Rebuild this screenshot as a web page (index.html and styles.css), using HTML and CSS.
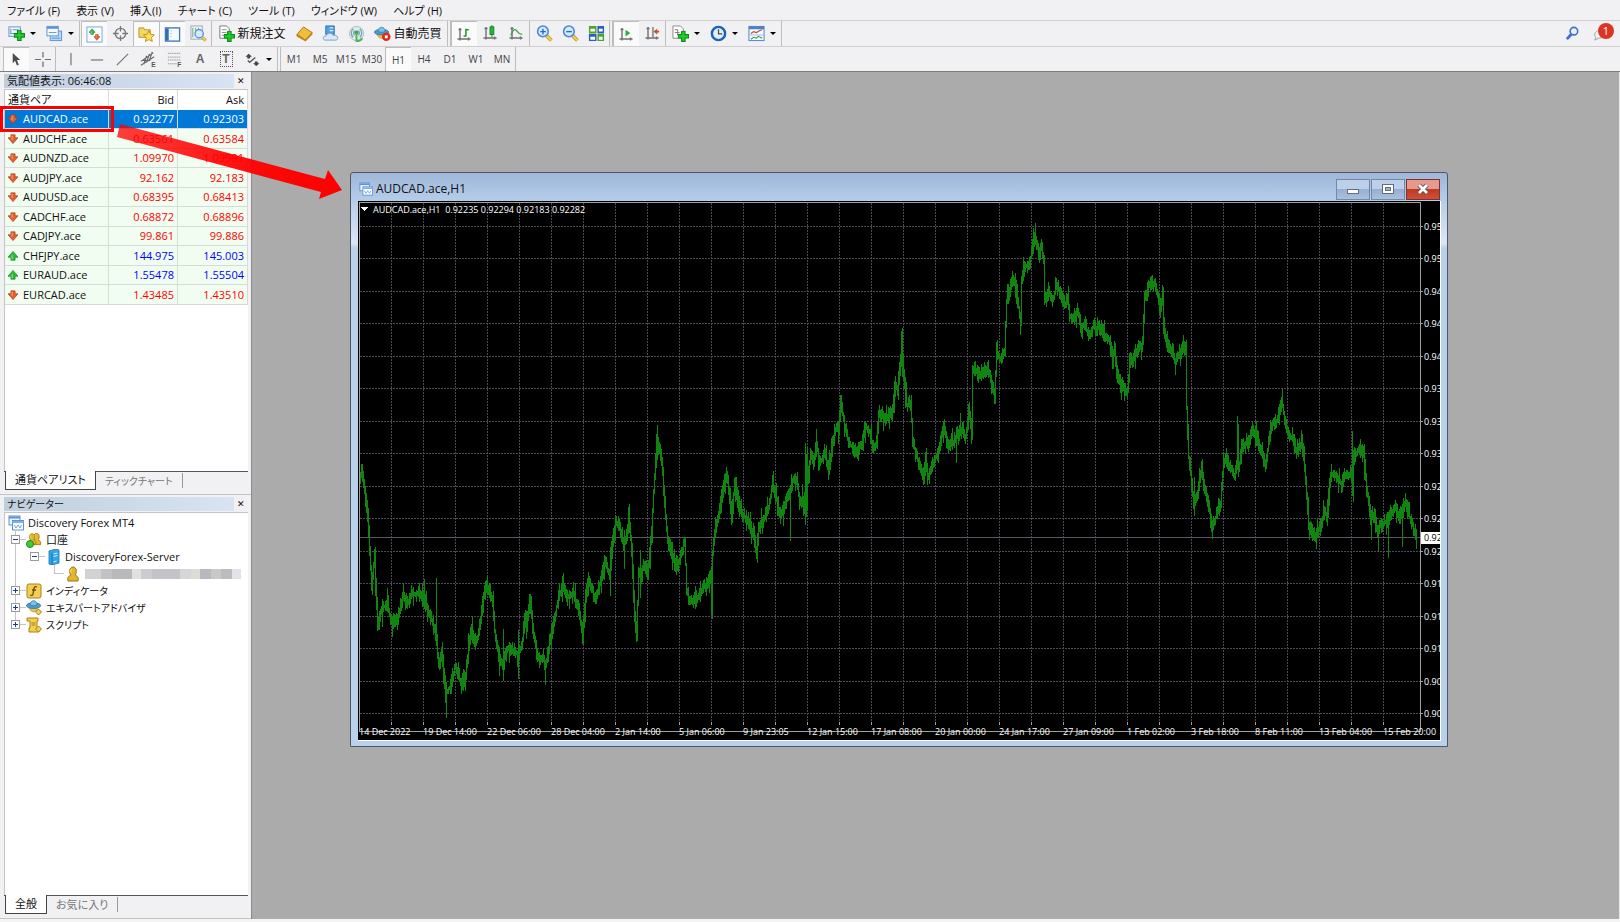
FILE: index.html
```
<!DOCTYPE html>
<html lang="ja">
<head>
    <meta charset="UTF-8">
    <meta name="viewport" content="width=device-width, initial-scale=1.0">
    <title>Discovery Forex MT4</title>
    <link rel="stylesheet" href="styles.css">
</head>
<body>

    <nav class="menu-bar">
        <button>ファイル (F)</button>
        <button>表示 (V)</button>
        <button>挿入(I)</button>
        <button>チャート (C)</button>
        <button>ツール (T)</button>
        <button>ウィンドウ (W)</button>
        <button>ヘルプ (H)</button>
    </nav>

    <!-- shared icon shapes -->
    <svg class="defs" aria-hidden="true">
        <symbol id="i-plus" viewBox="0 0 10 10"><path d="M3.5 .5h3v3h3v3h-3v3h-3v-3h-3v-3h3z" fill="#1fd02c" stroke="#0a8a18"/></symbol>
        <symbol id="i-axes" viewBox="0 0 16 16"><path d="M4 2v12.500M1.500 13h13M2.500 3.500h3M12.500 11.500v3" fill="none" stroke="#707070" stroke-width="1.400"/></symbol>
        <symbol id="i-charts" viewBox="0 0 16 16"><rect x="1" y="1" width="11" height="9" fill="#eaf3fd" stroke="#5b93d6"/><path d="M1 2.500h11" stroke="#5b93d6" stroke-width="2"/><rect x="4.500" y="5.500" width="11" height="9.500" fill="#fff" stroke="#5b93d6"/><path d="M4.500 7h11" stroke="#7fb0ea" stroke-width="2"/><path d="M6 10l2 3 2-3 2 3 1.500-3" fill="none" stroke="#6fa2dd"/></symbol>
        <symbol id="i-down" viewBox="0 0 12 12"><path d="M3.500 1h5v3.500H12L6 11.500 0 4.500h3.500z" fill="#e2602c" stroke="#a83a18" stroke-width=".8"/><path d="M5 2v5" stroke="#ffb08a"/></symbol>
        <symbol id="i-up" viewBox="0 0 12 12"><path d="M3.500 11h5V7.500H12L6 .5 0 7.500h3.500z" fill="#2fb83a" stroke="#12801f" stroke-width=".8"/><path d="M5 5v5" stroke="#a2efa0"/></symbol>
        <symbol id="i-man" viewBox="0 0 16 16"><path d="M3 15c-1-4 1-5 3-6C4 7 4 1 8 1s4 6 2 8c2 1 4 2 3 6z" fill="#e3b62c" stroke="#9b7410"/><path d="M6.500 3c-1 1-1 3 0 4" stroke="#fbe58c" fill="none"/></symbol>
        <symbol id="i-hat" viewBox="0 0 18 16"><path d="M3 8c2 8 9 8 11 0z" fill="#f0c341" stroke="#a8811d" stroke-width=".7"/><ellipse cx="8.500" cy="7" rx="8" ry="3.200" fill="#4d9bcb" stroke="#2f75a5"/><path d="M4.500 6c0-6 8-6 8 0-2 1.500-6 1.500-8 0z" fill="#79c1e8" stroke="#2f75a5" stroke-width=".8"/></symbol>
        <symbol id="i-lens" viewBox="0 0 16 16"><path d="M10 10l4.500 4.500" stroke="#c99a1e" stroke-width="3.400"/><path d="M10 10l4.500 4.500" stroke="#f4d765" stroke-width="1.500"/><circle cx="6.500" cy="6" r="5" fill="#d3eaff" stroke="#4c8bd4" stroke-width="1.500"/></symbol>
    </svg>

    <div class="toolbar">
        <button class="tool drop" aria-label="新規チャート"><svg viewBox="0 0 18 18"><rect x="1" y="2" width="12" height="10" fill="#eef6ff" stroke="#5b93d6"/><path d="M3 4v6M3 9h8M5 5h6" stroke="#6e8fae"/><use href="#i-plus" x="6" y="5" width="12" height="12"/></svg></button>
        <button class="tool drop" aria-label="表示の組表示"><svg viewBox="0 0 18 18"><rect x="4.500" y="6.500" width="12" height="10" fill="#bcd6f5" stroke="#5b93d6"/><rect x="1" y="1.500" width="12" height="10" fill="#f4f9ff" stroke="#5b93d6"/><path d="M1 3h12" stroke="#5b93d6" stroke-width="2"/><path d="M3 8h8M6 14h9" stroke="#5b93d6"/></svg></button>
        <i class="sep"></i>
        <button class="tool on" aria-label="気配値表示"><svg viewBox="0 0 18 18"><rect x="1" y="1" width="16" height="16" fill="#fff" stroke="#6ea4e6"/><use href="#i-up" x="3" y="2" width="7" height="8"/><use href="#i-down" x="8" y="8" width="7" height="8"/></svg></button>
        <button class="tool" aria-label="データウィンドウ"><svg viewBox="0 0 18 18"><circle cx="9" cy="9" r="5.500" fill="none" stroke="#777" stroke-width="1.400"/><path d="M9 1v6M9 11v6M1 9h6M11 9h6" stroke="#777" stroke-width="1.400"/></svg></button>
        <button class="tool on" aria-label="ナビゲーター"><svg viewBox="0 0 18 18"><path d="M1 2h5l1 2h6v8H1z" fill="#f6d465" stroke="#b99224"/><path d="M11.500 5l1.800 3.800 4 .5-3 2.900.8 4.200-3.600-2-3.600 2 .8-4.200-3-2.900 4-.5z" fill="#ffe14d" stroke="#b08a14" stroke-width=".9"/></svg></button>
        <button class="tool on" aria-label="ターミナル"><svg viewBox="0 0 18 18"><rect x="1.500" y="2" width="15" height="14" fill="#f4faff" stroke="#3f76bd" stroke-width="1.400"/><path d="M3.500 2.500v13" stroke="#356db5" stroke-width="3"/><path d="M7 5h1M7 8h1M7 11h1" stroke="#8ab"/></svg></button>
        <button class="tool" aria-label="ストラテジーテスター"><svg viewBox="0 0 18 18"><rect x="1" y="1" width="12" height="14" fill="#eef3f8" stroke="#9aa7b5"/><path d="M3 3v10M6 3v6M9 3v4" stroke="#6ba46b"/><use href="#i-lens" x="4" y="4" width="14" height="14"/></svg></button>
        <i class="sep"></i>
        <button class="tool text"><svg viewBox="0 0 18 18"><path d="M2 1h7l3 3v10H2z" fill="#fff" stroke="#777"/><path d="M4 5h5M4 8h5M4 11h4" stroke="#888"/><use href="#i-plus" x="6" y="6" width="12" height="12"/></svg>新規注文</button>
        <button class="tool" aria-label="MetaEditor"><svg viewBox="0 0 18 18"><path d="M1 10L8 2l9 6-7 8z" fill="#f0bd3c" stroke="#a87812"/><path d="M1 10v2l9 5 7-7V8l-7 8z" fill="#c98c1c" stroke="#a87812" stroke-width=".6"/></svg></button>
        <button class="tool" aria-label="VPS"><svg viewBox="0 0 18 18"><path d="M4 1h9v9H4z" fill="#4f9fe6" stroke="#2d6fb5"/><path d="M8 3h4M8 6h4" stroke="#fff"/><path d="M3 16c-3-1-2-5 1-4 1-4 7-4 8-1 5-1 6 4 3 5z" fill="#dbe8f7" stroke="#7a9cc4"/></svg></button>
        <button class="tool" aria-label="シグナル"><svg viewBox="0 0 18 18"><circle cx="9" cy="9" r="7.500" fill="#dfe8ea" stroke="#a9bcc2"/><path d="M5.500 13a6 6 0 010-9M12.500 13a6 6 0 000-9M7 11a3.500 3.500 0 010-5M11 11a3.500 3.500 0 000-5" fill="none" stroke="#6c9fb8" stroke-width="1.200"/><circle cx="9" cy="8" r="2.200" fill="#3da84a"/><path d="M9 9v8c3 0 5-1 6-3" fill="none" stroke="#4eb455" stroke-width="2"/></svg></button>
        <button class="tool text"><svg viewBox="0 0 18 18"><use href="#i-hat" x="0" y="1" width="17" height="15"/><circle cx="13" cy="12.500" r="4.500" fill="#df2a1a"/><rect x="11.500" y="11" width="3" height="3" fill="#fff"/></svg>自動売買</button>
        <i class="grip"></i>
        <button class="tool on" aria-label="バーチャート"><svg viewBox="0 0 18 18"><use href="#i-axes" width="17" height="17"/><path d="M10.500 3v8M10.500 4h3M8 10.500h2.500" stroke="#1c9a2c" stroke-width="1.600"/></svg></button>
        <button class="tool" aria-label="ローソク足"><svg viewBox="0 0 18 18"><use href="#i-axes" width="17" height="17"/><path d="M10.500 0v13" stroke="#14801f"/><rect x="8.500" y="2" width="4" height="8" fill="#25b93a" stroke="#14801f"/></svg></button>
        <button class="tool" aria-label="ラインチャート"><svg viewBox="0 0 18 18"><use href="#i-axes" width="17" height="17"/><path d="M3 11C6 3 8 4 10 7s3 3 5 3" fill="none" stroke="#3aa04a" stroke-width="1.300"/></svg></button>
        <i class="sep"></i>
        <button class="tool" aria-label="ズームイン"><svg viewBox="0 0 18 18"><use href="#i-lens" width="18" height="18"/><path d="M4.500 7h6M7.400 4v6" stroke="#2b6cc0" stroke-width="1.500"/></svg></button>
        <button class="tool" aria-label="ズームアウト"><svg viewBox="0 0 18 18"><use href="#i-lens" width="18" height="18"/><path d="M4.500 7h6" stroke="#2b6cc0" stroke-width="1.500"/></svg></button>
        <button class="tool" aria-label="整列"><svg viewBox="0 0 18 18"><path d="M1 1h8v8H1zM10 9.500h7V17h-7z" fill="#4da32f"/><path d="M10 1h7v8h-7zM1 9.500h8V17H1z" fill="#2c5fb8"/><path d="M2.500 4h5v3h-5zM11.500 4h4v3h-4zM2.500 12.500h5v3h-5zM11.500 12.500h4v3h-4z" fill="#fff"/></svg></button>
        <i class="grip"></i>
        <button class="tool on" aria-label="自動スクロール"><svg viewBox="0 0 18 18"><use href="#i-axes" width="17" height="17"/><path d="M8 4l5 3.500L8 11z" fill="#25b03a"/></svg></button>
        <button class="tool" aria-label="チャートシフト"><svg viewBox="0 0 18 18"><use href="#i-axes" width="17" height="17"/><path d="M9.500 2v11" stroke="#666" stroke-width="1.300"/><path d="M10 7l4-3v2h2v2h-2v2z" fill="#cc4a1e"/></svg></button>
        <i class="sep"></i>
        <button class="tool drop" aria-label="インディケータ"><svg viewBox="0 0 18 18"><path d="M1 1h8l3 3v10H1z" fill="#fff" stroke="#888"/><path d="M3 5h3v6M3 8h5" stroke="#777" fill="none"/><use href="#i-plus" x="6" y="6" width="12" height="12"/></svg></button>
        <button class="tool drop" aria-label="時間足"><svg viewBox="0 0 18 18"><circle cx="9" cy="9" r="7" fill="#e3f0fc" stroke="#1b63ba" stroke-width="2.600"/><path d="M9 4.500V9.500h4" fill="none" stroke="#445" stroke-width="1.300"/></svg></button>
        <button class="tool drop" aria-label="定型チャート"><svg viewBox="0 0 18 18"><rect x="1" y="1.500" width="16" height="15" fill="#f5faff" stroke="#4a82c4"/><path d="M1 3h16" stroke="#4a82c4" stroke-width="3"/><path d="M3 9l3-2 3 1 3-2 3-1" fill="none" stroke="#c4452e" stroke-width="1.200"/><path d="M1 10.500h16" stroke="#9bbbe0"/><path d="M3 15l3-2 3 1 2-2 4 2" fill="none" stroke="#3aa04a" stroke-width="1.200"/></svg></button>
        <i class="end"></i>
        <div class="right">
            <button class="tool" aria-label="検索"><svg viewBox="0 0 18 18"><path d="M7.500 10L3 15" stroke="#3c6fd6" stroke-width="3"/><circle cx="10.500" cy="6.500" r="4" fill="#eef4ff" stroke="#3c6fd6" stroke-width="1.700"/></svg></button>
            <button class="tool notice" aria-label="通知"><svg viewBox="0 0 18 18"><path d="M2 16l1-3C0 10 3 5 8 6s5 8-2 8z" fill="#f3f3f7" stroke="#9c9ea8"/></svg><b>1</b></button>
        </div>
    </div>

    <div class="toolbar tools2">
        <button class="tool on" aria-label="カーソル"><svg viewBox="0 0 18 18"><path d="M5 2l8 7.500H9.500l2 5-2 .8-2-5L5 13z" fill="#4c4c4c"/></svg></button>
        <button class="tool" aria-label="クロスヘア"><svg viewBox="0 0 18 18"><path d="M9.500 1v6M9.500 11v6M1 9h6.500M11.500 9H18" stroke="#6d6d6d" stroke-width="1.300"/></svg></button>
        <i class="sep"></i>
        <button class="tool" aria-label="垂直線"><svg viewBox="0 0 18 18"><path d="M9.500 2v13" stroke="#777" stroke-width="1.300"/></svg></button>
        <button class="tool" aria-label="水平線"><svg viewBox="0 0 18 18"><path d="M3 9.500h13" stroke="#777" stroke-width="1.300"/></svg></button>
        <button class="tool" aria-label="トレンドライン"><svg viewBox="0 0 18 18"><path d="M3 15L15 3" stroke="#777" stroke-width="1.300"/></svg></button>
        <button class="tool" aria-label="チャネル"><svg viewBox="0 0 18 18"><path d="M1 11L14 2M1 15L15 6M4 14l3-9M7 12l3-9M10 10l3-9M2 10h9" stroke="#666" stroke-width="1.200"/><text x="12" y="17" class="tiny">E</text></svg></button>
        <button class="tool" aria-label="フィボナッチ"><svg viewBox="0 0 18 18"><path d="M2 2.500h14M2 6.500h14M2 9.500h14M2 13.500h9" stroke="#777" stroke-dasharray="1 1"/><text x="12" y="17" class="tiny">F</text></svg></button>
        <button class="tool letter">A</button>
        <button class="tool letter boxed"><span>T</span></button>
        <button class="tool drop" aria-label="矢印"><svg viewBox="0 0 18 18"><path d="M5 3l3.500 3H6.500v2h-3V6h-2zM13 16l-3.500-3h2v-2h3v2h2z" fill="#444"/><path d="M4 10l2 2 6-5" fill="none" stroke="#555" stroke-width="1.400"/></svg></button>
        <i class="grip"></i>
        <button class="tool time">M1</button>
        <button class="tool time">M5</button>
        <button class="tool time">M15</button>
        <button class="tool time">M30</button>
        <button class="tool time on">H1</button>
        <button class="tool time">H4</button>
        <button class="tool time">D1</button>
        <button class="tool time">W1</button>
        <button class="tool time">MN</button>
        <i class="end"></i>
    </div>

    <main class="main">
        <aside class="side">
            <section class="panel market">
                <header class="panel-title"><h2>気配値表示: 06:46:08</h2><button aria-label="閉じる">✕</button></header>
                <div class="panel-body">
                    <table class="quotes">
                        <thead>
                            <tr><th>通貨ペア</th><th>Bid</th><th>Ask</th></tr>
                        </thead>
                        <tbody>
                            <tr class="selected"><td><svg><use href="#i-down"/></svg>AUDCAD.ace</td><td>0.92277</td><td>0.92303</td></tr>
                            <tr><td><svg><use href="#i-down"/></svg>AUDCHF.ace</td><td>0.63561</td><td>0.63584</td></tr>
                            <tr><td><svg><use href="#i-down"/></svg>AUDNZD.ace</td><td>1.09970</td><td>1.09991</td></tr>
                            <tr><td><svg><use href="#i-down"/></svg>AUDJPY.ace</td><td>92.162</td><td>92.183</td></tr>
                            <tr><td><svg><use href="#i-down"/></svg>AUDUSD.ace</td><td>0.68395</td><td>0.68413</td></tr>
                            <tr><td><svg><use href="#i-down"/></svg>CADCHF.ace</td><td>0.68872</td><td>0.68896</td></tr>
                            <tr><td><svg><use href="#i-down"/></svg>CADJPY.ace</td><td>99.861</td><td>99.886</td></tr>
                            <tr class="up"><td><svg><use href="#i-up"/></svg>CHFJPY.ace</td><td>144.975</td><td>145.003</td></tr>
                            <tr class="up"><td><svg><use href="#i-up"/></svg>EURAUD.ace</td><td>1.55478</td><td>1.55504</td></tr>
                            <tr><td><svg><use href="#i-down"/></svg>EURCAD.ace</td><td>1.43485</td><td>1.43510</td></tr>
                        </tbody>
                    </table>
                </div>
                <div class="tabs"><button class="active">通貨ペアリスト</button><button class="kana">ティックチャート</button></div>
            </section>

            <section class="panel navigator">
                <header class="panel-title"><h2 class="kana">ナビゲーター</h2><button aria-label="閉じる">✕</button></header>
                <div class="panel-body">
                    <ul class="tree">
                        <li><svg><use href="#i-charts"/></svg>Discovery Forex MT4</li>
                        <li class="l1"><button class="minus" aria-label="折りたたむ"></button><svg viewBox="0 0 16 16"><use href="#i-man" x="4" y="-1" width="13" height="16"/><use href="#i-man" x="0" y="0" width="12" height="14"/><circle cx="4" cy="12" r="3.500" fill="#3ecb3e" stroke="#198a19"/></svg>口座</li>
                        <li class="l2"><button class="minus" aria-label="折りたたむ"></button><svg viewBox="0 0 16 16"><path d="M4 2l7-2 3 1v13l-7 2-3-1z" fill="#33a6e8" stroke="#1673b5" stroke-width=".8"/><path d="M7 4v12" stroke="#1673b5"/><path d="M8.500 5l4-1M8.500 7.500l4-1M8.500 13l3-1" stroke="#d6f0ff"/></svg>DiscoveryForex-Server</li>
                        <li class="l3"><svg><use href="#i-man"/></svg><span class="masked"></span></li>
                        <li class="l1 kana"><button class="plus" aria-label="展開"></button><svg viewBox="0 0 16 16"><rect x="1" y="1" width="14" height="14" rx="2" fill="#f3cd55" stroke="#a8811d"/><path d="M11 4c-2-1-3 0-3 2l-1 5c0 1-1 2-3 1M6 7h4" fill="none" stroke="#6b4d08" stroke-width="1.300"/></svg>インディケータ</li>
                        <li class="l1 kana"><button class="plus" aria-label="展開"></button><svg viewBox="0 0 16 16"><use href="#i-hat" y="-1" width="16" height="15"/><path d="M12.500 9l3 3-3 3-3-3z" fill="#f5cf4e" stroke="#a8811d"/></svg>エキスパートアドバイザ</li>
                        <li class="l1 kana"><button class="plus" aria-label="展開"></button><svg viewBox="0 0 16 16"><path d="M1 1h11v3h-1v9h2v2H3v-4h1V4H1z" fill="#f5cf4e" stroke="#a8811d"/><path d="M5.500 6h4M5.500 8h4" stroke="#a8811d"/><path d="M12.500 9l3 3-3 3-3-3z" fill="#f5cf4e" stroke="#a8811d"/></svg>スクリプト</li>
                    </ul>
                </div>
                <div class="tabs"><button class="active">全般</button><button>お気に入り</button></div>
            </section>
        </aside>

        <div class="desktop">
            <article class="chart-window">
                <header class="window-title">
                    <svg><use href="#i-charts"/></svg>
                    <h1>AUDCAD.ace,H1</h1>
                    <div class="window-buttons">
                        <button aria-label="最小化"><svg viewBox="0 0 14 12"><rect x="1.500" y="6.500" width="11" height="4" fill="#fff" stroke="#626c80"/></svg></button>
                        <button aria-label="最大化"><svg viewBox="0 0 14 12"><rect x="1.500" y="1.500" width="11" height="9" fill="#fff" stroke="#626c80"/><rect x="4.500" y="4.500" width="5" height="3" fill="#9fb4d0" stroke="#626c80"/></svg></button>
                        <button class="close" aria-label="閉じる"><svg viewBox="0 0 14 12"><path d="M3 2l8 8M11 2l-8 8" stroke="#5a4450" stroke-width="4.500"/><path d="M3 2l8 8M11 2l-8 8" stroke="#fff" stroke-width="2.800"/></svg></button>
                    </div>
                </header>
                <svg class="chart" viewBox="358 201 1082 539" id="chart">
                    <rect x="358" y="201" width="1082" height="539" fill="#000"/>
                    <path id="grid" class="grid"/>
                    <path class="bid-line" d="M359 537.500H1420"/>
                    <path id="bars" class="bars"/>
                    <path class="frame" d="M359.500 731.500V202.500H1420.500V731.500H359.500"/>
                    <path id="ticks" class="frame"/>
                    <path d="M361 207h7l-3.500 4z" fill="#fff"/>
                    <text x="373" y="213">AUDCAD.ace,H1&#160; 0.92235 0.92294 0.92183 0.92282</text>
                    <g id="labels"></g>
                </svg>
            </article>
        </div>

        <div class="mark"></div>
        <svg class="pointer" viewBox="0 0 228 78">
            <defs><linearGradient id="fade"><stop offset="0" stop-color="#f00" stop-opacity=".75"/><stop offset=".6" stop-color="#f00" stop-opacity=".95"/><stop offset="1" stop-color="#f00"/></linearGradient></defs>
            <path d="M4 2L209 57l3-9 14 20-23 9 2-7L1 15z" fill="url(#fade)"/>
        </svg>
    </main>

    <footer class="status"></footer>

    <script src="chart.js"></script>
</body>
</html>
```
FILE: styles.css
```
/* General */
* {
    box-sizing: border-box;
}
body {
    margin: 0;
    height: 100vh;
    display: flex;
    flex-direction: column;
    overflow: hidden;
    background: #f1f0f2;
    color: #111;
    font: 11px/16px "Open Sans", "Noto Sans CJK JP", sans-serif;
    font-feature-settings: "palt";
}
button {
    font: inherit;
    color: inherit;
    font-feature-settings: inherit;
    background: none;
    border: 0;
    padding: 0;
    margin: 0;
}
h1, h2 {
    margin: 0;
    font: inherit;
}
.defs {
    position: absolute;
    width: 0;
    height: 0;
}
.tabs .kana, .tree .kana, .panel-title .kana {
    font-size: 10px;
}

/* Menu */
.menu-bar {
    display: flex;
    gap: 16px;
    height: 21px;
    padding: 1px 7px 0;
    border-bottom: 1px solid #cfced0;
}

/* Toolbars */
.toolbar {
    display: flex;
    align-items: stretch;
    height: 26px;
    padding-left: 3px;
    border-bottom: 1px solid #cfced0;
}
.tool {
    width: 26px;
    flex: none;
    display: flex;
    align-items: center;
    justify-content: center;
}
.tool svg {
    width: 17px;
    height: 17px;
    flex: none;
}
.tool.on {
    background: #fafafa;
    border-left: 1px solid #bdbdbd;
    border-top: 1px solid #bdbdbd;
}
.tool.drop {
    width: 38px;
    gap: 5px;
}
.tool.drop::after {
    content: "";
    border: 3px solid transparent;
    border-top: 3px solid #000;
    border-bottom: 0;
}
.tool.text {
    width: 78px;
    gap: 2px;
    font-size: 12px;
}
.sep, .grip, .end {
    width: 2px;
    flex: none;
    border-left: 1px solid #bdbdbd;
}
.grip {
    width: 4px;
    border-right: 1px solid #bdbdbd;
}
.right {
    margin-left: auto;
    display: flex;
    gap: 3px;
    padding-right: 6px;
}
.notice {
    position: relative;
}
.notice b {
    position: absolute;
    top: 2px;
    right: 0;
    width: 16px;
    height: 16px;
    border-radius: 8px;
    background: #dc3522;
    color: #fff;
    font-weight: 400;
    text-align: center;
}
.tools2 {
    height: 25px;
    border-bottom-color: #7d7d7d;
}
.tool.letter {
    font: 700 12px "Liberation Sans", sans-serif;
    color: #666;
}
.boxed span {
    width: 13px;
    border: 1px dotted #555;
}
.tiny {
    font: 700 7px "Liberation Sans", sans-serif;
    fill: #555;
}
.time {
    font-size: 10px;
    color: #444;
}

/* Left side */
.main {
    position: relative;
    flex: 1;
    min-height: 0;
    display: flex;
}
.side {
    width: 252px;
    flex: none;
    display: flex;
    flex-direction: column;
    border-right: 1px solid #8b8b8b;
}
.panel {
    display: flex;
    flex-direction: column;
    padding: 2px 3px 4px 4px;
    border-bottom: 1px solid #c4c3c6;
}
.market {
    flex: 423;
}
.navigator {
    flex: 424;
}
.panel-title {
    display: flex;
    align-items: center;
    height: 14px;
    margin-bottom: 1px;
}
.panel-title h2 {
    flex: 1;
    height: 14px;
    line-height: 14px;
    padding-left: 3px;
    background: linear-gradient(90deg, #bfcddd, #d8e4f4);
}
.panel-title button {
    width: 14px;
    font-size: 9px;
    line-height: 14px;
}
.panel-body {
    flex: 1;
    min-height: 0;
    background: #fff;
    border-top: 1px solid #c4c3c6;
    border-left: 1px solid #c4c3c6;
}
.quotes {
    width: 100%;
    border-collapse: separate;
    border-spacing: 0;
    table-layout: fixed;
}
.quotes th, .quotes td {
    height: 20px;
    padding: 0 3px;
    font-weight: 400;
    text-align: right;
    line-height: 16px;
    border-right: 1px solid #d8dcd8;
    border-bottom: 1px solid #d4dcd4;
}
.quotes th {
    border-bottom-color: #fff;
}
.quotes tbody tr:nth-child(odd) td {
    height: 19px;
}
.quotes th:first-child, .quotes td:first-child {
    width: 104px;
    text-align: left;
}
.quotes th:nth-child(2) {
    width: 69px;
}
.quotes tbody tr {
    background: #f1fdf1;
    color: #f00;
}
.quotes tbody tr.up {
    color: #00f;
}
.quotes td:first-child {
    color: #111;
}
.quotes svg {
    width: 10px;
    height: 10px;
    margin-right: 5px;
    vertical-align: -1px;
}
.quotes tbody tr.selected, .quotes .selected td:first-child {
    background: #0078d7;
    color: #fff;
}

/* Tabs */
.tabs {
    display: flex;
    height: 19px;
    padding-left: 1px;
    border-top: 1px solid #555;
}
.tabs button {
    padding: 0 9px;
    margin: 1px 0 2px;
    color: #777;
    border-right: 1px solid #999;
}
.tabs .active {
    margin: -1px 0 0;
    color: #111;
    background: #fff;
    border: 1px solid #444;
    border-top: 0;
}

/* Navigator tree */
.tree {
    list-style: none;
    margin: 0;
    padding: 1px 0 0 3px;
    background: linear-gradient(#c4c4c4, #c4c4c4) 10px 18px / 1px 94px no-repeat;
}
.tree li {
    display: flex;
    align-items: center;
    height: 17px;
    gap: 4px;
}
.tree svg {
    width: 16px;
    height: 16px;
    flex: none;
}
.tree .l1 {
    padding-left: 3px;
    background: linear-gradient(#c4c4c4, #c4c4c4) 12px 50% / 6px 1px no-repeat;
}
.tree .l2 {
    padding-left: 22px;
    background: linear-gradient(#c4c4c4, #c4c4c4) 31px 50% / 6px 1px no-repeat;
}
.tree .l3 {
    padding-left: 57px;
    background: linear-gradient(#c4c4c4, #c4c4c4) 46px 50% / 10px 1px no-repeat, linear-gradient(#c4c4c4, #c4c4c4) 46px 0 / 1px 8px no-repeat;
}
.tree button {
    width: 9px;
    height: 9px;
    margin-right: 2px;
    border: 1px solid #9a9a9a;
    background: linear-gradient(#1c3f94, #1c3f94) center / 5px 1px no-repeat #fff;
}
.tree .plus {
    background: linear-gradient(#1c3f94, #1c3f94) center / 5px 1px no-repeat, linear-gradient(#1c3f94, #1c3f94) center / 1px 5px no-repeat #fff;
}
.masked {
    flex: 1;
    height: 10px;
    margin-right: 7px;
    background: linear-gradient(90deg, #d2d2d4 0 10%, #c2c2c4 10% 17%, #b9b9bb 17% 30%, #dfe0df 30% 36%, #cbcbd0 36% 43%, #c3c3c9 43% 61%, #d6d6d9 61% 68%, #dedcd8 68% 74%, #b8b9c0 74% 81%, #c8c8c8 81% 87%, #bcbcbc 87% 94%, #e2e2e8 94%);
}

/* Chart window */
.desktop {
    position: relative;
    flex: 1;
    min-width: 0;
    background: #ababab;
    border-right: 1px solid #e8e8e8;
}
.chart-window {
    position: absolute;
    left: 98px;
    right: 171px;
    top: 100px;
    padding: 0 6px 5px 7px;
    background: linear-gradient(#9fb7d8, #b6cdea 28px, #dbe7f6 70px, #b9d1ea 75px);
    border: 1px solid #4d5866;
    border-radius: 3px 3px 0 0;
}
.window-title {
    display: flex;
    align-items: center;
    height: 28px;
    font-size: 12px;
    gap: 3px;
}
.window-title > svg {
    width: 14px;
    height: 14px;
    margin: 4px 0 0 1px;
}
.window-title h1 {
    flex: 1;
    padding-top: 4px;
}
.window-buttons {
    display: flex;
    gap: 1px;
    padding: 4px 1px 0 0;
}
.window-buttons button {
    width: 34px;
    height: 21px;
    display: flex;
    align-items: center;
    justify-content: center;
    border: 1px solid #7488a8;
    background: linear-gradient(#bdd0ea 45%, #98afd0 50%, #a9c0de);
}
.window-buttons .close {
    border-color: #7c3030;
    background: linear-gradient(#e59a8c 45%, #c03a22 50%, #cb5138);
}
.window-buttons svg {
    width: 14px;
    height: 12px;
}
.chart {
    display: block;
    box-sizing: content-box;
    width: calc(100% - 1px);
    border-right: 1px solid #fff;
    border-bottom: 1px solid #fff;
}
.chart path {
    shape-rendering: crispEdges;
}
.chart text {
    font: 500 9px "Open Sans", sans-serif;
    fill: #fff;
}
.grid {
    stroke: #4b4b55;
    stroke-dasharray: 2 1;
    fill: none;
}
.bid-line {
    stroke: #585862;
}
.bars {
    stroke: #108510;
    fill: none;
}
.frame {
    stroke: #a0a0a0;
    fill: none;
}
.chart .now {
    fill: #000;
}

/* Highlight and arrow over the market list */
.mark {
    position: absolute;
    left: 0;
    top: 34px;
    width: 114px;
    height: 26px;
    border: 3px solid #f00;
}
.pointer {
    position: absolute;
    left: 116px;
    top: 50px;
    width: 228px;
    height: 78px;
    pointer-events: none;
}
.status {
    height: 3px;
    background: #f4f4f4;
}
```
FILE: chart.js
```
// middle of the price range along the time axis: x,y pairs
const points = `360,477 362,470 365,493 368,515 370,553 372,587 375,553 376,583 378,627 381,613 384,607 388,607 392,622 398,618 403,597 408,603 412,593 420,595 424,598 428,612 433,622 437,640 439,667 442,653 444,670 446,695 450,687 456,665 462,687 466,675 469,647 472,627 475,645 479,633 483,603 487,583 491,595 493,597 495,630 499,657 503,667 508,647 513,650 519,655 523,640 525,617 527,625 530,600 533,627 537,653 539,660 543,657 546,667 550,642 555,617 559,597 563,585 568,598 573,593 578,607 583,635 586,597 589,578 595,597 600,585 605,563 610,573 613,543 616,520 620,528 624,547 627,537 629,515 632,550 635,620 637,635 639,573 642,573 645,563 648,573 652,533 654,490 657,442 660,450 663,470 665,507 668,540 672,553 677,567 682,553 685,540 687,590 690,603 697,600 702,590 707,583 711,577 712,606 713,553 715,530 720,510 723,490 727,473 729,490 732,517 735,483 738,500 742,513 748,520 754,533 757,555 759,527 765,517 770,503 773,482 777,500 781,517 787,500 790,495 793,482 797,480 800,503 803,498 806,510 807,457 808,483 811,452 814,463 817,443 820,463 825,453 829,470 833,443 836,430 839,427 841,402 845,427 849,443 857,453 862,443 866,427 870,433 874,450 877,443 879,415 885,418 892,413 896,387 898,390 901,360 902,336 903,367 907,405 911,403 913,440 917,457 922,470 924,480 926,457 928,477 933,462 938,455 944,427 948,447 955,440 960,427 966,437 969,410 972,432 973,373 975,368 980,377 988,367 993,385 995,397 997,350 1000,360 1005,353 1007,300 1010,290 1013,277 1017,293 1021,323 1022,277 1025,267 1030,263 1033,247 1035,235 1039,253 1042,247 1044,260 1045,297 1047,300 1049,290 1053,300 1057,285 1060,293 1065,305 1068,297 1070,317 1075,320 1078,310 1081,327 1085,323 1089,337 1093,328 1102,327 1105,337 1110,340 1113,360 1115,347 1117,373 1122,387 1128,392 1130,360 1135,360 1138,348 1143,343 1145,300 1147,295 1149,283 1156,285 1158,297 1161,310 1163,293 1164,323 1167,342 1172,350 1176,363 1180,352 1186,346 1187,407 1189,457 1192,483 1194,503 1198,493 1202,467 1204,483 1207,500 1209,503 1212,531 1216,517 1221,503 1224,460 1228,462 1235,477 1238,457 1239,467 1243,447 1248,442 1253,430 1257,437 1260,450 1266,463 1271,427 1278,420 1282,400 1285,420 1289,437 1293,437 1297,453 1301,443 1304,458 1307,493 1309,523 1313,535 1317,533 1321,527 1324,513 1327,515 1330,483 1332,475 1338,478 1342,485 1345,473 1352,473 1353,467 1355,457 1359,448 1364,455 1367,487 1371,520 1373,513 1378,530 1383,523 1388,520 1392,513 1396,507 1400,520 1403,507 1406,500 1409,515 1415,532 1417,540`
    .split(' ').map(p => p.split(',').map(Number));

// long single bars: x, high, low
const spikes = [
    [375, 547, 575], [387, 588, 612], [403, 583, 600], [424, 579, 605], [436, 578, 645], [446, 690, 718],
    [472, 616, 640], [503, 629, 681], [518, 630, 679], [545, 660, 685], [563, 573, 590], [583, 620, 645],
    [610, 547, 596], [624, 530, 569], [637, 600, 641], [640, 550, 598], [657, 425, 460], [712, 570, 619],
    [757, 540, 563], [790, 490, 541], [805, 443, 525], [807, 446, 510], [841, 395, 410], [902, 328, 370],
    [956, 438, 463], [995, 370, 404], [1035, 228, 245], [1194, 477, 516], [1237, 416, 470], [1238, 424, 477],
    [1282, 389, 408], [1316, 530, 549], [1352, 431, 496], [1353, 450, 502], [1371, 515, 540], [1378, 525, 551],
    [1388, 513, 558], [1402, 510, 547], [1416, 535, 549]
];

let seed = 7;
function rnd() {
    seed = (seed * 16807) % 2147483647;
    return seed / 2147483647;
}

// bars
let d = '';
for (let i = 0; i < points.length - 1; i++) {
    const [x0, y0] = points[i];
    const [x1, y1] = points[i + 1];
    const step = (y1 - y0) / (x1 - x0);
    for (let x = x0; x < x1; x++) {
        const y = y0 + step * (x - x0);
        let hi = Math.min(y, y + step) - 1 - rnd() * 7;
        let lo = Math.max(y, y + step) + 1 + rnd() * 7;
        if (rnd() > 0.8) hi -= rnd() * 9;
        if (rnd() > 0.8) lo += rnd() * 9;
        d += `M${x + 0.5} ${Math.round(hi)}V${Math.round(lo)}`;
    }
}
spikes.forEach(([x, hi, lo]) => d += `M${x + 0.5} ${hi}V${lo}`);
document.getElementById('bars').setAttribute('d', d);

// grid and axis labels
const prices = ['0.95', '0.95', '0.94', '0.94', '0.94', '0.93', '0.93', '0.93', '0.92', '0.92', '0.92', '0.91', '0.91', '0.91', '0.90', '0.90'];
const dates = ['14 Dec 2022', '19 Dec 14:00', '22 Dec 06:00', '28 Dec 04:00', '2 Jan 14:00', '5 Jan 06:00', '9 Jan 23:05', '12 Jan 15:00', '17 Jan 08:00', '20 Jan 00:00', '24 Jan 17:00', '27 Jan 09:00', '1 Feb 02:00', '3 Feb 18:00', '8 Feb 11:00', '13 Feb 04:00', '15 Feb 20:00'];
let grid = '', ticks = '', labels = '';
for (let x = 391; x < 1400; x += 32) {
    grid += `M${x + 0.5} 203V724`;
    ticks += `M${x + 0.5} 722V725`;
}
prices.forEach((p, i) => {
    const y = Math.floor(226 + 32.5 * i) + 0.5;
    grid += `M360 ${y}H1420`;
    ticks += `M1420 ${y}h3`;
    labels += `<text class="price" x="1424" y="${y + 3.5}">${p}</text>`;
});
dates.forEach((t, i) => labels += `<text x="${359 + 64 * i}" y="735">${t}</text>`);
labels += '<rect x="1421" y="532" width="19" height="12" fill="#fff"/><text class="now" x="1424" y="541">0.92</text>';
document.getElementById('grid').setAttribute('d', grid);
document.getElementById('ticks').setAttribute('d', ticks);
document.getElementById('labels').innerHTML = labels;
```
